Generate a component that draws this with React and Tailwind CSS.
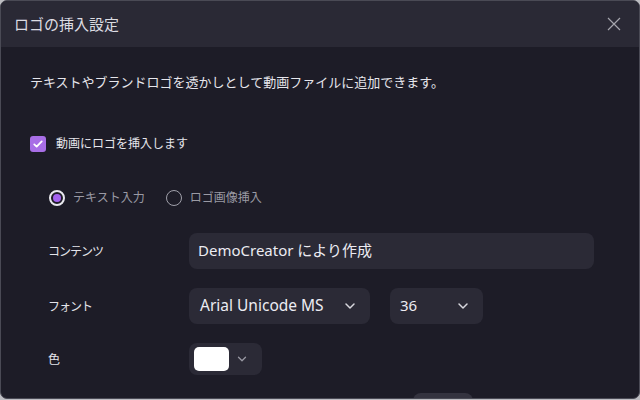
import React from 'react';

const font = { fontFamily: '"Noto Sans", "Noto Sans CJK JP", sans-serif' };

const Chevron = ({ className = '' }) => (
  <svg viewBox="0 0 16 16" className={className} fill="none" stroke="currentColor" strokeWidth="1.5" strokeLinecap="round" strokeLinejoin="round">
    <path d="M4 6l4 4 4-4" />
  </svg>
);

const Row = ({ label, children }) => (
  <div className="flex items-center">
    <div className="w-[188px] pl-[47px] pt-[3px] text-[12px] tracking-[-1px] text-[#e4e4ea]">{label}</div>
    {children}
  </div>
);

export default function App() {
  return (
    <div className="w-[640px] h-[400px] bg-[#bdbdc2]" style={font}>
      <div className="w-[640px] h-[399px] rounded-[7px] border border-[#4a4a55] bg-[#1d1c27] overflow-hidden flex flex-col">
        {/* Header */}
        <div className="h-[46px] shrink-0 bg-[#2a2935] flex items-center justify-between pl-[13px] pr-[17px]">
          <span className="text-[15px] text-[#dcdce2]">ロゴの挿入設定</span>
          <svg viewBox="0 0 16 16" className="w-4 h-4 text-[#a5a5ad]" fill="none" stroke="currentColor" strokeWidth="1.2">
            <path d="M2 2l12 12M14 2L2 14" />
          </svg>
        </div>

        {/* Body */}
        <div className="flex flex-col">
          <p className="mt-[26px] pl-[29px] text-[13px] text-[#e6e6ec]">
            テキストやブランドロゴを透かしとして動画ファイルに追加できます。
          </p>

          <div className="mt-[42px] pl-[29px] flex items-center gap-[10px]">
            <div className="w-4 h-4 rounded-[3px] bg-[#a86ee6] flex items-center justify-center">
              <svg viewBox="0 0 16 16" className="w-3 h-3" fill="none" stroke="white" strokeWidth="2.4" strokeLinecap="round" strokeLinejoin="round">
                <path d="M3 8.5l3.2 3L13 4.5" />
              </svg>
            </div>
            <span className="text-[12px] text-[#e6e6ec]">動画にロゴを挿入します</span>
          </div>

          <div className="mt-[36px] pl-[48px] flex items-center text-[12px] text-[#9a9aa4]">
            <div className="w-4 h-4 rounded-full border-2 border-[#e8e8ee] flex items-center justify-center">
              <div className="w-[8px] h-[8px] rounded-full bg-[#a462f0]" />
            </div>
            <span className="ml-[8px]">テキスト入力</span>
            <div className="ml-[21px] w-4 h-4 rounded-full border-[1.5px] border-[#a0a0aa]" />
            <span className="ml-[8px]">ロゴ画像挿入</span>
          </div>

          <div className="mt-[26px] flex flex-col gap-[19px]">
            <Row label="コンテンツ">
              <div className="w-[405px] h-[36px] rounded-lg bg-[#2b2a36] flex items-center px-[9px] text-[15px] text-[#ececf2]">
                DemoCreator により作成
              </div>
            </Row>

            <Row label="フォント">
              <div className="flex gap-[20px]">
                <div className="w-[181px] h-[36px] rounded-lg bg-[#2b2a36] flex items-center justify-between pl-[11px] pr-[12px] text-[15.5px] text-[#ececf2]">
                  <span>Arial Unicode MS</span>
                  <Chevron className="w-4 h-4 text-[#d8d8de]" />
                </div>
                <div className="w-[93px] h-[36px] rounded-lg bg-[#2b2a36] flex items-center justify-between pl-[10px] pr-[12px] text-[15px] text-[#ececf2]">
                  <span>36</span>
                  <Chevron className="w-4 h-4 text-[#d8d8de]" />
                </div>
              </div>
            </Row>

            <Row label="色">
              <div className="w-[73px] h-[32px] rounded-lg bg-[#2b2a36] flex items-center pl-[5px] gap-[6px]">
                <div className="w-[35px] h-[24px] rounded-[5px] bg-white" />
                <Chevron className="w-[14px] h-[14px] text-[#9a9aa4]" />
              </div>
            </Row>
          </div>

          <div className="mt-[18px] ml-[412px] w-[60px] h-[20px] shrink-0 rounded-lg bg-[#34333f]" />
        </div>
      </div>
    </div>
  );
}
